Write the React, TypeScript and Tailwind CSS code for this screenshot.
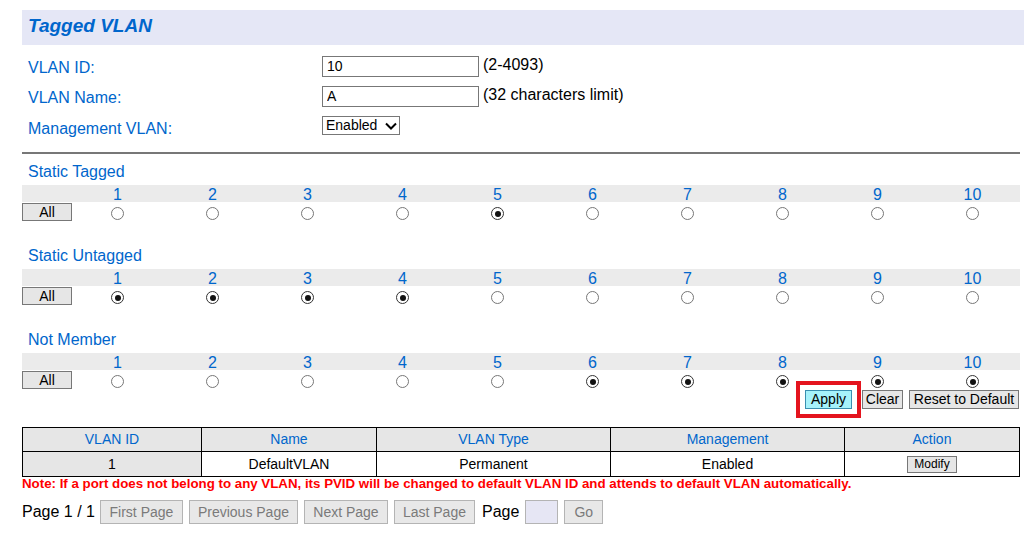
const ports = [1, 2, 3, 4, 5, 6, 7, 8, 9, 10];

const sections = [
  { title: "Static Tagged", checked: [5] },
  { title: "Static Untagged", checked: [1, 2, 3, 4] },
  { title: "Not Member", checked: [6, 7, 8, 9, 10] },
];

function Radio({ on }: { on: boolean }) {
  return (
    <span
      className={
        "flex h-[13px] w-[13px] items-center justify-center rounded-full border bg-white " +
        (on ? "border-[#333]" : "border-[#777]")
      }
    >
      {on && <span className="h-[6px] w-[6px] rounded-full bg-[#111]" />}
    </span>
  );
}

function GrayBtn({ label, className = "" }: { label: string; className?: string }) {
  return (
    <button
      className={
        "flex h-[24px] items-center justify-center border border-[#b4b4b4] bg-[#e8e8e8] text-[14px] text-[#7a7a7a] " +
        className
      }
    >
      {label}
    </button>
  );
}

export default function App() {
  return (
    <div className="h-[538px] w-[1034px] overflow-hidden bg-white pl-[22px] pt-[10px] font-['Liberation_Sans',Arial,sans-serif] text-black">
      {/* title banner */}
      <div className="flex h-[35px] w-[1002px] items-center bg-[#e5e7f6] pl-[6px]">
        <h1 className="-mt-[3px] text-[19px] font-bold italic text-[#0066cc]">Tagged VLAN</h1>
      </div>

      <div className="w-[998px]">
        {/* form */}
        <div className="mt-[11px] flex flex-col gap-[9px] pl-[6px] text-[16px]">
          <div className="flex h-[21px] items-center">
            <span className="mt-[3px] w-[294px] text-[#0066cc]">VLAN ID:</span>
            <input
              readOnly
              value="10"
              className="h-[21px] w-[157px] border border-[#777] px-[4px] text-[14px] outline-none"
            />
            <span className="ml-[4px] -mt-[4px]">(2-4093)</span>
          </div>
          <div className="flex h-[21px] items-center">
            <span className="mt-[3px] w-[294px] text-[#0066cc]">VLAN Name:</span>
            <input
              readOnly
              value="A"
              className="h-[21px] w-[157px] border border-[#777] px-[4px] text-[14px] outline-none"
            />
            <span className="ml-[4px] -mt-[4px]">(32 characters limit)</span>
          </div>
          <div className="flex h-[19px] items-center">
            <span className="mt-[7px] w-[294px] text-[#0066cc]">Management VLAN:</span>
            <div className="flex h-[19px] w-[78px] items-center justify-between border border-[#777] pl-[3px] pr-[2px] text-[14px]">
              <span>Enabled</span>
              <svg width="12" height="8" viewBox="0 0 12 8">
                <path d="M1 1.5 6 6.5 11 1.5" stroke="#000" strokeWidth="2" fill="none" />
              </svg>
            </div>
          </div>
        </div>

        <div className="mt-[17px] border-t-[2px] border-[#777]" />

        {/* port sections */}
        {sections.map((s, i) => (
          <div key={s.title} className={i === 0 ? "mt-[6px]" : "mt-[22px]"}>
            <div className="flex h-[23px] items-center pl-[6px] text-[16px] text-[#0066cc]">{s.title}</div>
            <div className="mt-[2px] flex h-[17px] bg-[#ebebeb] pl-[48px] text-[16px] leading-[17px] text-[#0066cc]">
              {ports.map((p) => (
                <div key={p} className="flex-1 pt-[1px] text-center">
                  {p}
                </div>
              ))}
            </div>
            <div className="flex h-[20px] items-start">
              <button className="mt-[1px] flex h-[18px] w-[50px] shrink-0 items-center justify-center border border-[#777] bg-[#e6e6e6] text-[14px]">
                All
              </button>
              <div className="-ml-[2px] flex flex-1 pt-[5px]">
                {ports.map((p) => (
                  <div key={p} className="flex flex-1 justify-center">
                    <Radio on={s.checked.includes(p)} />
                  </div>
                ))}
              </div>
            </div>
          </div>
        ))}

        {/* apply row */}
        <div className="-mt-[9px] flex items-center justify-end gap-[6px] pr-[1px]">
          <div className="flex h-[37px] w-[65px] items-center justify-center border-[4px] border-[#e4141e]">
            <button className="flex h-[19px] w-[47px] items-center justify-center border border-[#3a8fb0] bg-[#a6f2fb] text-[14px]">
              Apply
            </button>
          </div>
          <button className="-ml-[5px] flex h-[19px] w-[41px] items-center justify-center border border-[#777] bg-[#e6e6e6] text-[14px]">
            Clear
          </button>
          <button className="flex h-[19px] w-[110px] items-center justify-center border border-[#777] bg-[#e6e6e6] text-[14px]">
            Reset to Default
          </button>
        </div>

        {/* table */}
        <table className="mt-[9px] w-[998px] border-collapse text-[14px]">
          <thead>
            <tr className="h-[24px] bg-[#e6e6e6] text-[#0066cc]">
              <th className="w-[179px] border border-black font-normal">VLAN ID</th>
              <th className="w-[175px] border border-black font-normal">Name</th>
              <th className="w-[234px] border border-black font-normal">VLAN Type</th>
              <th className="w-[234px] border border-black font-normal">Management</th>
              <th className="border border-black font-normal">Action</th>
            </tr>
          </thead>
          <tbody>
            <tr className="h-[25px] text-center">
              <td className="border border-black bg-[#e6e6e6]">1</td>
              <td className="border border-black">DefaultVLAN</td>
              <td className="border border-black">Permanent</td>
              <td className="border border-black">Enabled</td>
              <td className="border border-black">
                <button className="mx-auto flex h-[17px] w-[50px] items-center justify-center border border-[#777] bg-[#e6e6e6] text-[12px]">
                  Modify
                </button>
              </td>
            </tr>
          </tbody>
        </table>

        <p className="text-[13.3px] font-bold leading-[14px] text-[#ff0000]">
          Note: If a port does not belong to any VLAN, its PVID will be changed to default VLAN ID and attends to default VLAN automatically.
        </p>

        {/* pagination */}
        <div className="mt-[9px] flex items-center gap-[6px] text-[16px]">
          <span className="-mr-[1px]">Page 1 / 1</span>
          <GrayBtn label="First Page" className="w-[83px]" />
          <GrayBtn label="Previous Page" className="w-[109px]" />
          <GrayBtn label="Next Page" className="w-[84px]" />
          <GrayBtn label="Last Page" className="w-[81px]" />
          <span className="ml-[1px]">Page</span>
          <span className="h-[24px] w-[33px] border border-[#b4b4b4] bg-[#e6e6f4]" />
          <GrayBtn label="Go" className="w-[39px]" />
        </div>
      </div>
    </div>
  );
}
